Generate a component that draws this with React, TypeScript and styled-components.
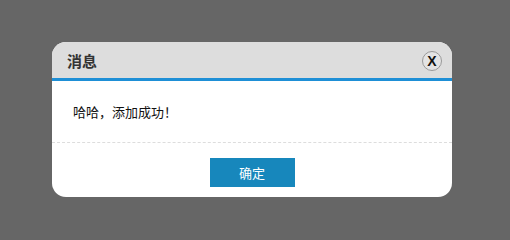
import React from "react";
import styled, { createGlobalStyle } from "styled-components";

const GlobalStyle = createGlobalStyle`
    html, body {
        margin: 0;
        padding: 0;
        background-color: #666666;
    }
    body {
        font-family: "Liberation Sans", "Noto Sans CJK SC", sans-serif;
    }
`;

const Overlay = styled.div`
    width: 510px;
    height: 235px;
    padding: 42px 0 0 52px;
    box-sizing: border-box;
    background-color: #666666;
`;

const Dialog = styled.div`
    width: 400px;
    height: 155px;
    background-color: #ffffff;
    border-radius: 14px;
    overflow: hidden;
    display: flex;
    flex-direction: column;
`;

const Header = styled.div`
    height: 36px;
    background-color: #dddddd;
    border-bottom: 3px solid #1e8fd6;
    display: flex;
    align-items: center;
    justify-content: space-between;
    padding: 0 10px 0 15px;
`;

const Title = styled.h3`
    margin: 0;
    font-size: 15px;
    font-weight: 600;
    color: #333333;
    font-family: "Noto Sans CJK SC", sans-serif;
`;

const CloseButton = styled.button`
    width: 20px;
    height: 20px;
    border-radius: 50%;
    border: 1px solid #999999;
    background: #e4e4e4;
    padding: 0;
    margin-top: 2px;
    display: flex;
    align-items: center;
    justify-content: center;
    font-family: "Liberation Sans", sans-serif;
    font-weight: 600;
    font-size: 14px;
    line-height: 1;
    color: #111111;
    cursor: pointer;
`;

const Body = styled.div`
    height: 61px;
    display: flex;
    align-items: center;
    padding: 0 21px;
    border-bottom: 1px dashed #dddddd;
    font-size: 13px;
    color: #111111;
    font-family: "Noto Sans CJK SC", sans-serif;
`;

const Footer = styled.div`
    flex: 1;
    display: flex;
    justify-content: center;
    padding-top: 15px;
`;

const OkButton = styled.button`
    width: 85px;
    height: 29px;
    border: none;
    background-color: #1787bc;
    color: #ffffff;
    font-size: 13px;
    font-family: "Noto Sans CJK SC", sans-serif;
    cursor: pointer;
`;

function App() {
    return (
        <>
            <GlobalStyle />
            <Overlay>
                <Dialog>
                    <Header>
                        <Title>消息</Title>
                        <CloseButton>X</CloseButton>
                    </Header>
                    <Body>哈哈，添加成功！</Body>
                    <Footer>
                        <OkButton>确定</OkButton>
                    </Footer>
                </Dialog>
            </Overlay>
        </>
    );
}

export default App;
